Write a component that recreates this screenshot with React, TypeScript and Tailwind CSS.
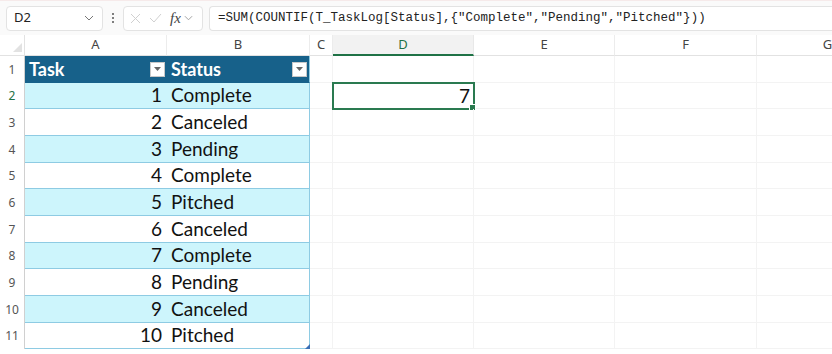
import React from "react";

const cols = [
  { label: "A", w: 142 },
  { label: "B", w: 143 },
  { label: "C", w: 23 },
  { label: "D", w: 141 },
  { label: "E", w: 141 },
  { label: "F", w: 142 },
  { label: "G", w: 142 },
];

const rowH = [27, 26, 27, 27, 26, 27, 27, 26, 27, 27, 26];

const data: [number, string][] = [
  [1, "Complete"],
  [2, "Canceled"],
  [3, "Pending"],
  [4, "Complete"],
  [5, "Pitched"],
  [6, "Canceled"],
  [7, "Complete"],
  [8, "Pending"],
  [9, "Canceled"],
  [10, "Pitched"],
];

function FilterBtn() {
  return (
    <div className="w-[15px] h-[15px] bg-white border border-[#c8c8c8] flex items-center justify-center">
      <svg width="7" height="4" viewBox="0 0 7 4">
        <path d="M0 0 L7 0 L3.5 4 Z" fill="#666" />
      </svg>
    </div>
  );
}

export default function App() {
  const font = { fontFamily: "Lato, 'Liberation Sans', sans-serif" };
  return (
    <div className="w-[832px] h-[354px] overflow-hidden bg-white relative" style={{ fontFamily: "'Liberation Sans', Arial, sans-serif" }}>
      {/* formula bar */}
      <div className="h-[35px] bg-[#fafafa] border-t border-[#f6eaea] flex items-center pl-[6px] gap-[6px]">
        <div className="w-[97px] h-[25px] bg-white border border-[#e3e3e3] rounded-[4px] flex items-center justify-between pl-[7px] pr-[8px]">
          <span className="text-[13px] text-[#222]" style={{ fontFamily: "'Noto Sans', sans-serif" }}>D2</span>
          <svg width="10" height="6" viewBox="0 0 10 6"><path d="M1 1 L5 5 L9 1" stroke="#777" strokeWidth="1" fill="none" /></svg>
        </div>
        <div className="w-[8px] flex flex-col items-center gap-[2px]">
          <div className="w-[2px] h-[2px] bg-[#555] rounded-full" />
          <div className="w-[2px] h-[2px] bg-[#555] rounded-full" />
          <div className="w-[2px] h-[2px] bg-[#555] rounded-full" />
        </div>
        <div className="w-[80px] h-[25px] bg-white border border-[#e3e3e3] rounded-[4px] flex items-center pl-[6px] gap-[8px]">
          <svg width="11" height="11" viewBox="0 0 11 11"><path d="M1 1 L10 10 M10 1 L1 10" stroke="#d0d0d0" strokeWidth="1" /></svg>
          <svg width="13" height="10" viewBox="0 0 13 10"><path d="M1 5 L5 9 L12 1" stroke="#d0d0d0" strokeWidth="1" fill="none" /></svg>
          <span className="text-[15px] italic text-[#444] leading-none" style={{ fontFamily: "'Liberation Serif', serif" }}>fx</span>
          <svg width="9" height="6" viewBox="0 0 10 6" className="-ml-[5px]"><path d="M1 1 L5 5 L9 1" stroke="#999" strokeWidth="1" fill="none" /></svg>
        </div>
        <div className="flex-1 h-[25px] bg-white border border-[#e3e3e3] rounded-l-[4px] border-r-0 flex items-center pl-[8px]">
          <span className="text-[12.5px] text-[#222] whitespace-pre" style={{ fontFamily: "'Liberation Mono', 'DejaVu Sans Mono', monospace" }}>
            =SUM(COUNTIF(T_TaskLog[Status],{"{"}"Complete","Pending","Pitched"{"}"}))
          </span>
        </div>
      </div>

      {/* column headers */}
      <div className="flex h-[21px] bg-white">
        <div className="w-[25px] shrink-0 border-r border-b border-[#e2e2e2] relative">
          <svg width="9" height="9" viewBox="0 0 9 9" className="absolute right-[2px] bottom-[3px]"><path d="M9 0 L9 9 L0 9 Z" fill="#e2e2e2" /></svg>
        </div>
        {cols.map((c) => {
          const sel = c.label === "D";
          return (
            <div
              key={c.label}
              style={{ width: c.w }}
              className={
                "shrink-0 flex items-center justify-center text-[13px] border-r " +
                (sel
                  ? "bg-[#f2f2f2] text-[#1f7246] border-b-2 border-b-[#1f7246] border-r-[#e8e8e8]"
                  : "text-[#444] border-b border-[#e2e2e2] border-r-[#ececec]")
              }
            >
              <span style={{ fontFamily: "'Noto Sans', sans-serif" }}>{c.label}</span>
            </div>
          );
        })}
      </div>

      {/* rows */}
      {rowH.map((h, i) => {
        const r = i + 1;
        const isHeader = r === 1;
        const band = !isHeader && r % 2 === 0;
        const d = !isHeader ? data[r - 2] : null;
        const tableBg = isHeader ? "bg-[#17618a]" : band ? "bg-[#cdf5fc]" : "bg-white";
        const tableBorder = isHeader ? "border-b border-[#17618a]" : "border-b border-[#8ecbe3]";
        return (
          <div key={r} className="flex" style={{ height: h }}>
            <div
              className={
                "w-[25px] shrink-0 flex items-center justify-center text-[12px] border-r border-[#d0d0d0] " +
                (r === 2 ? "text-[#1f7246]" : "text-[#555]")
              }
              style={{ fontFamily: "'Noto Sans', sans-serif" }}
            >
              {r}
            </div>
            {/* A */}
            <div
              className={"w-[142px] shrink-0 flex items-center " + tableBg + " " + tableBorder + (isHeader ? " justify-between pl-[4px] pr-[2px]" : " justify-end pr-[5px]")}
              style={font}
            >
              {isHeader ? (
                <>
                  <span className="text-[18px] font-bold text-white">Task</span>
                  <FilterBtn />
                </>
              ) : (
                <span className="text-[19px] text-[#111]">{d![0]}</span>
              )}
            </div>
            {/* B */}
            <div
              className={"w-[143px] shrink-0 flex items-center border-r border-r-[#8ecbe3] " + tableBg + " " + tableBorder + (isHeader ? " justify-between pl-[4px] pr-[2px]" : " pl-[4px]")}
              style={font}
            >
              {isHeader ? (
                <>
                  <span className="text-[18px] font-bold text-white">Status</span>
                  <FilterBtn />
                </>
              ) : (
                <span className="text-[19px] text-[#111]">{d![1]}</span>
              )}
            </div>
            {/* C */}
            <div className="w-[23px] shrink-0 border-r border-b border-[#f3f3f3]" />
            {/* D */}
            <div className="w-[141px] shrink-0 border-r border-b border-[#f3f3f3] relative">
              {r === 2 && (
                <div className="absolute -left-[1px] -top-[1px] w-[143px] h-[28px] border-2 border-[#2a7a50] flex items-center justify-end pr-[3px]">
                  <span className="text-[19px] text-[#111]" style={font}>7</span>
                  <div className="absolute -right-[3px] -bottom-[3px] w-[5px] h-[5px] bg-[#2a7a50] border border-white box-content" />
                </div>
              )}
            </div>
            <div className="w-[141px] shrink-0 border-r border-b border-[#f3f3f3]" />
            <div className="w-[142px] shrink-0 border-r border-b border-[#f3f3f3]" />
            <div className="w-[142px] shrink-0 border-b border-[#f3f3f3]" />
          </div>
        );
      })}
      <div className="absolute left-[305px] top-[344px] w-0 h-0 border-l-[5px] border-l-transparent border-b-[5px] border-b-[#3b6fb6]" />
    </div>
  );
}
